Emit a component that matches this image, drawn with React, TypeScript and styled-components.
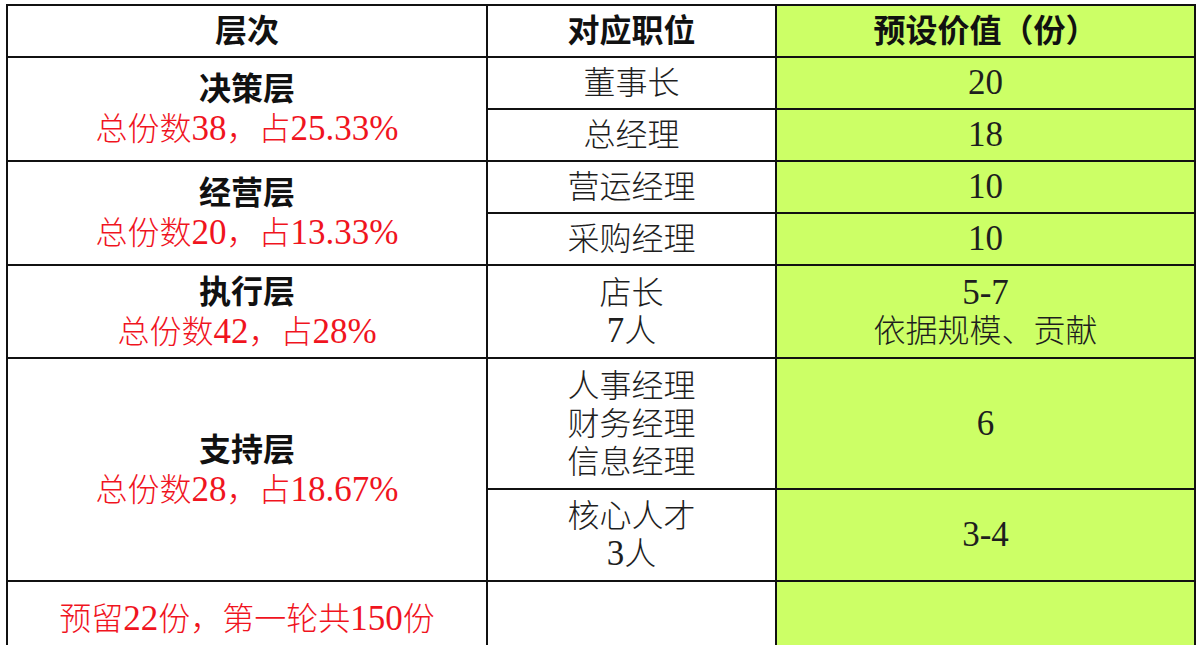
import React from "react";
import styled, { createGlobalStyle } from "styled-components";

const Global = createGlobalStyle`
  html, body { margin: 0; padding: 0; background: #ffffff; overflow: hidden; }
  body { font-family: "Liberation Serif", "Noto Sans CJK SC", serif; }
`;

const Page = styled.div`
  padding: 4px 0 0 6px;
  width: 1200px;
  height: 645px;
  box-sizing: border-box;
`;

const Table = styled.table`
  width: 1188px;
  border-collapse: collapse;
  table-layout: fixed;
`;

const Th = styled.th<{ $green?: boolean }>`
  height: 50px;
  border: 2px solid #111;
  background: ${(p) => (p.$green ? "#ccff66" : "#ffffff")};
  font-family: "Liberation Serif", "Noto Sans CJK SC", serif;
  font-size: 32px;
  font-weight: 700;
  color: #111;
  text-align: center;
  vertical-align: middle;
  padding: 0;
  line-height: 1.2;
`;

const Td = styled.td<{ $green?: boolean; $h?: number }>`
  height: ${(p) => (p.$h ? `${p.$h}px` : "50px")};
  border: 2px solid #111;
  background: ${(p) => (p.$green ? "#ccff66" : "#ffffff")};
  font-size: 32px;
  font-weight: 300;
  color: #1e1e1e;
  text-align: center;
  vertical-align: middle;
  padding: 0;
  line-height: 38px;
`;

const Level = styled.div`
  font-weight: 700;
  color: #111;
  line-height: 40px;
`;

const Share = styled.div`
  color: #f0141e;
  font-weight: 300;
  line-height: 40px;
`;

const Line = styled.div``;

const Num = styled.span`
  font-family: "Liberation Serif", serif;
  font-size: 35px;
  font-weight: 400;
`;

export default function App() {
  return (
    <>
      <Global />
      <Page>
        <Table>
          <colgroup>
            <col style={{ width: 480 }} />
            <col style={{ width: 289 }} />
            <col style={{ width: 419 }} />
          </colgroup>
          <thead>
            <tr>
              <Th>层次</Th>
              <Th>对应职位</Th>
              <Th $green>预设价值（份）</Th>
            </tr>
          </thead>
          <tbody>
            <tr>
              <Td rowSpan={2}>
                <Level>决策层</Level>
                <Share>
                  总份数<Num>38</Num>，占<Num>25.33%</Num>
                </Share>
              </Td>
              <Td>董事长</Td>
              <Td $green>
                <Num>20</Num>
              </Td>
            </tr>
            <tr>
              <Td>总经理</Td>
              <Td $green>
                <Num>18</Num>
              </Td>
            </tr>
            <tr>
              <Td rowSpan={2}>
                <Level>经营层</Level>
                <Share>
                  总份数<Num>20</Num>，占<Num>13.33%</Num>
                </Share>
              </Td>
              <Td>营运经理</Td>
              <Td $green>
                <Num>10</Num>
              </Td>
            </tr>
            <tr>
              <Td>采购经理</Td>
              <Td $green>
                <Num>10</Num>
              </Td>
            </tr>
            <tr>
              <Td $h={91}>
                <Level>执行层</Level>
                <Share>
                  总份数<Num>42</Num>，占<Num>28%</Num>
                </Share>
              </Td>
              <Td>
                <Line>店长</Line>
                <Line>
                  <Num>7</Num>人
                </Line>
              </Td>
              <Td $green>
                <Line>
                  <Num>5-7</Num>
                </Line>
                <Line>依据规模、贡献</Line>
              </Td>
            </tr>
            <tr>
              <Td rowSpan={2}>
                <Level>支持层</Level>
                <Share>
                  总份数<Num>28</Num>，占<Num>18.67%</Num>
                </Share>
              </Td>
              <Td $h={129}>
                <Line>人事经理</Line>
                <Line>财务经理</Line>
                <Line>信息经理</Line>
              </Td>
              <Td $green>
                <Num>6</Num>
              </Td>
            </tr>
            <tr>
              <Td $h={90}>
                <Line>核心人才</Line>
                <Line>
                  <Num>3</Num>人
                </Line>
              </Td>
              <Td $green>
                <Num>3-4</Num>
              </Td>
            </tr>
            <tr>
              <Td $h={74}>
                <Share>
                  预留<Num>22</Num>份，第一轮共<Num>150</Num>份
                </Share>
              </Td>
              <Td></Td>
              <Td $green></Td>
            </tr>
          </tbody>
        </Table>
      </Page>
    </>
  );
}
